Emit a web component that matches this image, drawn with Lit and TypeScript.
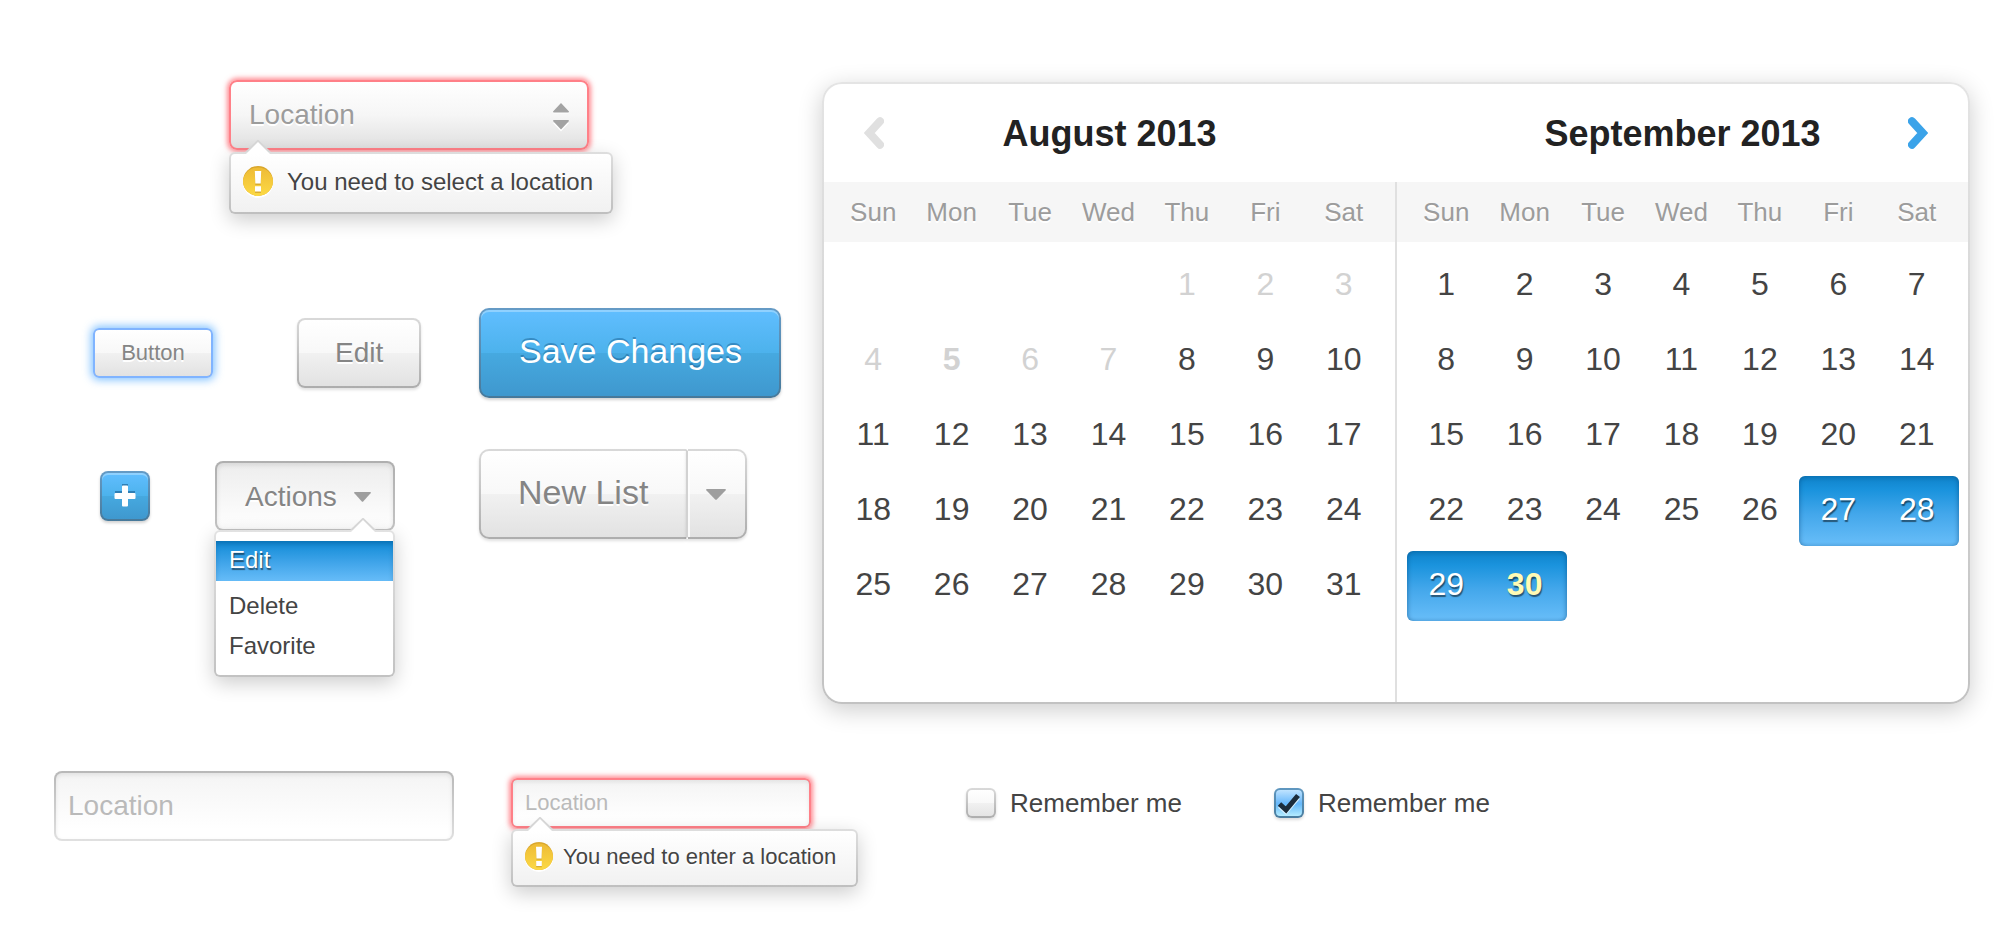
import { LitElement, html, css, nothing } from "lit";
import { customElement, property, state } from "lit/decorators.js";
import { classMap } from "lit/directives/class-map.js";

const font = css`
  :host {
    box-sizing: border-box;
    font-family: "Liberation Sans", Arial, Helvetica, sans-serif;
  }
  *,
  *::before,
  *::after {
    box-sizing: border-box;
  }
  button,
  input,
  select {
    font-family: inherit;
    margin: 0;
  }
`;

const arrow = html`<svg class="arrow" width="26" height="14" viewBox="0 0 26 14" aria-hidden="true">
  <path d="M0 12 L13 -0.5 L26 12 Z" fill="#d6d6d6" />
  <path d="M1 14 L13 2 L25 14 Z" fill="#fff" />
</svg>`;

const caret = (w: number, h: number) => html`<svg class="caret" width=${w} height=${h} viewBox="0 0 20 11" preserveAspectRatio="none" aria-hidden="true">
  <path d="M0.8 0 H19.2 Q20.4 0.4 19.5 1.4 L10.8 10.4 Q10 11.2 9.2 10.4 L0.5 1.4 Q-0.4 0.4 0.8 0 Z" fill="#9e9e9e" />
</svg>`;

@customElement("ui-tooltip")
class UiTooltip extends LitElement {
  @property() size = "large";

  static styles = [
    font,
    css`
      :host {
        display: block;
        white-space: nowrap;
      }
      .tip {
        position: relative;
        display: flex;
        align-items: center;
        gap: 14px;
        height: 62px;
        padding: 0 18px 2px 12px;
        border: 2px solid transparent;
        border-radius: 6px;
        background: linear-gradient(#fff, #f1f1f1) padding-box,
          linear-gradient(#dedede, #bfbfbf) border-box;
        box-shadow: 0 6px 20px rgba(0, 0, 0, 0.2);
        color: #444;
        font-size: 24px;
        text-shadow: 0 2px 0 #fff;
      }
      .small {
        gap: 10px;
        height: 58px;
        padding: 0 20px 2px 12px;
        font-size: 22px;
      }
      .arrow {
        position: absolute;
        left: 14px;
        top: -14px;
      }
      .icon {
        width: 30px;
        height: 32px;
        flex: none;
      }
      .small .icon {
        width: 28px;
        height: 30px;
      }
    `,
  ];

  render() {
    return html`<div class=${classMap({ tip: true, small: this.size === "small" })} role="alert">
      ${arrow}
      <svg class="icon" viewBox="0 0 30 32" aria-hidden="true">
        <defs>
          <linearGradient id="g" x1="0" y1="0" x2="0" y2="1">
            <stop offset="0" stop-color="#eebb35" />
            <stop offset="1" stop-color="#fddc46" />
          </linearGradient>
          <clipPath id="c"><circle cx="15" cy="15" r="15" /></clipPath>
        </defs>
        <circle cx="15" cy="17" r="15" fill="#fff" />
        <g clip-path="url(#c)">
          <rect width="30" height="30" fill="#d9a62b" />
          <circle cx="15" cy="17" r="15.5" fill="url(#g)" />
        </g>
        <path d="M11.8 6.4 H18.2 L17.7 19 H12.300 Z M12 21.800 H18 V27 H12 Z" fill="#cc9d2a" opacity="0.7" />
        <path d="M11.8 5 H18.2 L17.7 17.600 H12.300 Z M12 20.300 H18 V25.600 H12 Z" fill="#fff" />
      </svg>
      <span><slot></slot></span>
    </div>`;
  }
}

interface Month {
  title: string;
  offset: number;
  days: number;
  past: number;
  today?: number;
  accent?: number;
  range: number[];
}

@customElement("ui-calendar")
class UiCalendar extends LitElement {
  private months: Month[] = [
    { title: "August 2013", offset: 4, days: 31, past: 7, today: 5, range: [] },
    { title: "September 2013", offset: 0, days: 30, past: 0, accent: 30, range: [27, 28, 29, 30] },
  ];

  static styles = [
    font,
    css`
      :host {
        display: block;
      }
      .calendar {
        display: grid;
        grid-template-columns: minmax(0, 1fr) 2px minmax(0, 1fr);
        border: 2px solid transparent;
        border-radius: 20px;
        background: linear-gradient(#fff, #fff) padding-box,
          linear-gradient(#e4e4e4, #c2c2c2) border-box;
        box-shadow: 0 6px 24px rgba(0, 0, 0, 0.2);
      }
      .divider {
        margin-top: 98px;
        background: #e0e0e0;
      }
      .head {
        display: grid;
        grid-template-columns: 80px 1fr 80px;
        align-items: center;
        height: 98px;
        padding: 0 10px;
      }
      h2 {
        grid-column: 2;
        margin: 0;
        padding-top: 2px;
        color: #222;
        font-size: 36px;
        line-height: 40px;
        text-align: center;
        white-space: nowrap;
      }
      .nav {
        display: grid;
        place-items: center;
        grid-row: 1;
        padding: 8px;
        border: 0;
        background: none;
        color: #e0e0e0;
      }
      .next {
        grid-column: 3;
        color: #3ba3e9;
      }
      .grid {
        padding: 0 12px 4px 10px;
        background: linear-gradient(#f6f6f6, #f6f6f6) 0 0 / 100% 60px no-repeat;
      }
      table {
        width: 100%;
        table-layout: fixed;
        border-collapse: collapse;
      }
      th {
        height: 60px;
        padding: 0;
        color: #9c9c9c;
        font-size: 26px;
        font-weight: 400;
        text-shadow: 0 2px 0 #fff;
      }
      tbody::before {
        content: "";
        display: table-row;
        height: 6px;
      }
      td {
        height: 75px;
        padding: 0;
      }
      .day {
        display: block;
        width: 100%;
        height: 70px;
        padding: 0 0 2px;
        border: 0;
        background: none;
        color: #444;
        font-size: 32px;
        text-align: center;
      }
      .past {
        color: #d2d2d2;
      }
      .today {
        font-weight: 700;
      }
      .sel {
        background: linear-gradient(#0b76b8, #1389d2 6px, #1a93dd 14px, #43a7eb 38px, #64bbf7 66px, #58abe6);
        color: #fff;
        text-shadow: 1px 2px 1px rgba(0, 0, 0, 0.5);
      }
      .start {
        border-radius: 6px 0 0 6px;
        box-shadow: inset 4px 0 4px -3px rgba(0, 60, 110, 0.4);
      }
      .end {
        width: calc(100% + 3px);
        padding-right: 3px;
        border-radius: 0 6px 6px 0;
        box-shadow: inset -4px 0 4px -3px rgba(0, 60, 110, 0.4);
      }
      .accent {
        color: #fffbb5;
        font-weight: 700;
      }
    `,
  ];

  private day(m: Month, n: number, col: number) {
    if (n < 1 || n > m.days) return nothing;
    const sel = m.range.includes(n);
    return html`<button
      type="button"
      class=${classMap({
        day: true,
        past: n <= m.past,
        today: n === m.today,
        sel,
        start: sel && (col === 0 || !m.range.includes(n - 1)),
        end: sel && (col === 6 || !m.range.includes(n + 1)),
        accent: n === m.accent,
      })}
      ?disabled=${n <= m.past}
    >${n}</button>`;
  }

  private month(m: Month, i: number) {
    return html`<section>
      <div class="head">
        ${i === 0
          ? html`<button class="nav" type="button" aria-label="Previous month" disabled>
              <svg width="20" height="32" viewBox="0 0 20 32"><path d="M16 4.3 L5.3 16 L16 27.7" fill="none" stroke="currentColor" stroke-width="8" stroke-linecap="round" /></svg>
            </button>`
          : nothing}
        <h2>${m.title}</h2>
        ${i === 1
          ? html`<button class="nav next" type="button" aria-label="Next month">
              <svg width="20" height="32" viewBox="0 0 20 32"><path d="M4 4.3 L14.7 16 L4 27.7" fill="none" stroke="currentColor" stroke-width="8" stroke-linecap="round" /></svg>
            </button>`
          : nothing}
      </div>
      <div class="grid">
        <table aria-label=${m.title}>
          <thead>
            <tr>
              ${["Sun", "Mon", "Tue", "Wed", "Thu", "Fri", "Sat"].map((d) => html`<th scope="col">${d}</th>`)}
            </tr>
          </thead>
          <tbody>
            ${[0, 1, 2, 3, 4, 5].map(
              (r) => html`<tr>
                ${[0, 1, 2, 3, 4, 5, 6].map((c) => html`<td>${this.day(m, r * 7 + c + 1 - m.offset, c)}</td>`)}
              </tr>`
            )}
          </tbody>
        </table>
      </div>
    </section>`;
  }

  render() {
    return html`<div class="calendar">
      ${this.month(this.months[0], 0)}
      <div class="divider"></div>
      ${this.month(this.months[1], 1)}
    </div>`;
  }
}

@customElement("app-root")
class AppRoot extends LitElement {
  @state() private active = 0;

  static styles = [
    font,
    css`
      :host {
        display: block;
        min-height: 100vh;
        padding: 80px 30px 45px 54px;
        background: #fff;
      }
      .top {
        display: grid;
        grid-template-columns: 727px minmax(0, 1fr);
        column-gap: 41px;
      }
      ui-calendar {
        margin-top: 2px;
      }
      .field {
        position: relative;
      }
      .picker {
        width: 360px;
        margin: 0 0 158px 175px;
      }
      select {
        display: block;
        width: 100%;
        height: 70px;
        padding: 0 50px 2px 18px;
        appearance: none;
        border: 2px solid #ff8088;
        border-radius: 8px;
        background: linear-gradient(#fff, #f6f6f6 50%, #e0e0e0);
        box-shadow: 0 0 5px 2px rgba(255, 100, 110, 0.75);
        color: #9c9c9c;
        font-size: 28px;
        text-shadow: 0 2px 0 #fff;
      }
      .spin {
        position: absolute;
        right: 20px;
        top: 23px;
        pointer-events: none;
      }
      .tip {
        position: absolute;
        left: 0;
        top: calc(100% + 2px);
        z-index: 1;
      }
      .controls {
        display: flex;
        justify-content: space-between;
      }
      .minor {
        display: flex;
        flex-direction: column;
        gap: 73px;
        padding: 10px 0 0 39px;
      }
      .major {
        display: flex;
        flex-direction: column;
        align-items: flex-start;
        gap: 51px;
      }
      .row {
        display: flex;
        align-items: center;
      }
      .first {
        gap: 84px;
      }
      .second {
        gap: 65px;
        padding-left: 7px;
      }
      .btn {
        height: 70px;
        padding: 0 36px;
        border: 2px solid transparent;
        border-radius: 8px;
        background: linear-gradient(#fff, #f8f8f8 50%, #f1f1f1 50%, #e2e2e2) padding-box,
          linear-gradient(#d9d9d9, #adadad) border-box;
        box-shadow: 0 2px 3px rgba(0, 0, 0, 0.12);
        color: #858585;
        font-size: 28px;
        text-shadow: 0 2px 0 #fff;
        white-space: nowrap;
      }
      .focus {
        height: 50px;
        padding: 0;
        width: 120px;
        font-size: 22px;
        border-color: #80b4ff;
        border-radius: 6px;
        box-shadow: 0 0 8px 2px rgba(90, 175, 255, 0.75);
      }
      .primary {
        background: linear-gradient(#61beff, #4cb2ec 50%, #46a9e0 50%, #3f98ce) padding-box,
          linear-gradient(#659bc6, #47799a) border-box;
        box-shadow: 0 2px 3px rgba(0, 0, 0, 0.18), inset 0 2px 0 rgba(255, 255, 255, 0.3);
        color: #fff;
        text-shadow: 0 -2px 0 rgba(0, 60, 110, 0.35);
      }
      .large {
        height: 90px;
        padding: 0 37px 4px 38px;
        border-radius: 10px;
        font-size: 34px;
      }
      .square {
        display: grid;
        place-items: center;
        width: 50px;
        height: 50px;
        padding: 0;
      }
      .pressed {
        display: flex;
        align-items: center;
        gap: 17px;
        width: 180px;
        padding: 1px 0 0 28px;
        background: linear-gradient(#ededed, #fff) padding-box,
          linear-gradient(#afafaf, #c4c4c4) border-box;
        box-shadow: inset 0 2px 5px rgba(0, 0, 0, 0.1);
      }
      .menu {
        position: absolute;
        left: -1px;
        right: 0;
        top: calc(100% - 1px);
        display: flex;
        flex-direction: column;
        padding: 9px 0 8px;
        border: 2px solid transparent;
        border-radius: 6px;
        background: linear-gradient(#fff, #fff) padding-box,
          linear-gradient(#e2e2e2, #c2c2c2) border-box;
        box-shadow: 0 6px 20px rgba(0, 0, 0, 0.2);
      }
      .menu .arrow {
        position: absolute;
        left: 134px;
        top: -14px;
      }
      .item {
        height: 40px;
        padding: 0 13px 2px;
        border: 0;
        background: none;
        color: #444;
        font-size: 24px;
        text-align: left;
      }
      .item.on {
        margin-bottom: 6px;
        background: linear-gradient(#0f8ad6, #41a5ea 55%, #66bcf8);
        box-shadow: inset 0 4px 6px -2px rgba(0, 60, 110, 0.4);
        color: #fff;
        text-shadow: 1px 2px 1px rgba(0, 0, 0, 0.5);
      }
      .split {
        display: flex;
      }
      .split .main {
        padding: 0 38px 4px 37px;
        border-right: 0;
        border-radius: 10px 0 0 10px;
      }
      .split .more {
        display: grid;
        place-items: center;
        width: 61px;
        padding: 0 2px 0 0;
        border-radius: 0 10px 10px 0;
        border-left-color: #d2d2d2;
        box-shadow: 0 2px 3px rgba(0, 0, 0, 0.12), inset 2px 0 0 rgba(255, 255, 255, 0.8);
      }
      .bottom {
        display: flex;
        align-items: flex-start;
        gap: 57px;
        margin-top: 67px;
      }
      .text {
        display: block;
        width: 400px;
        height: 70px;
        padding: 0 12px;
        border: 2px solid transparent;
        border-radius: 8px;
        background: linear-gradient(#f4f4f4, #fff 85%) padding-box,
          linear-gradient(#b8b8b8, #e0e0e0) border-box;
        box-shadow: inset 0 2px 4px rgba(0, 0, 0, 0.08);
        color: #444;
        font-size: 28px;
      }
      .text::placeholder {
        color: #bababa;
        opacity: 1;
      }
      .invalid {
        width: 300px;
        height: 50px;
        border-color: #ff8088;
        border-radius: 6px;
        box-shadow: 0 0 5px 2px rgba(255, 100, 110, 0.75), inset 0 2px 4px rgba(0, 0, 0, 0.08);
        font-size: 22px;
      }
      .trailing {
        display: flex;
        align-items: center;
        height: 64px;
      }
      .trailing .tip {
        top: calc(100% + 1px);
      }
      .checks {
        display: flex;
        gap: 92px;
        margin-left: 155px;
      }
      .check {
        position: relative;
        display: flex;
        align-items: center;
        gap: 14px;
        color: #444;
        font-size: 26px;
        white-space: nowrap;
      }
      .box {
        width: 30px;
        height: 30px;
        appearance: none;
        border: 2px solid transparent;
        border-radius: 6px;
        background: linear-gradient(#fff, #f8f8f8 50%, #f1f1f1 50%, #e4e4e4) padding-box,
          linear-gradient(#d9d9d9, #adadad) border-box;
        box-shadow: 0 2px 3px rgba(0, 0, 0, 0.14);
      }
      .box:checked {
        background: linear-gradient(#bfe3ff, #6ab9fb 50%, #67bafa 55%, #b4ecff) padding-box,
          linear-gradient(#5f97c0, #4a7d9f) border-box;
      }
      .tick {
        position: absolute;
        left: 3px;
        top: 5px;
        display: none;
        pointer-events: none;
      }
      .box:checked + .tick {
        display: block;
      }
    `,
  ];

  render() {
    return html`
      <div class="top">
        <div>
          <div class="field picker">
            <select aria-label="Location">
              <option>Location</option>
            </select>
            <svg class="spin" width="16" height="29" viewBox="0 0 16 29" aria-hidden="true">
              <path d="M0 10.5 L8 2.5 L16 10.5 Z M0 20 L8 28.5 L16 20 Z" fill="#fff" />
              <path d="M0 8.5 L8 0 L16 8.5 Q16 9.5 15 9.5 H1 Q0 9.5 0 8.5 Z M0 18 Q0 17 1 17 H15 Q16 17 16 18 L8 26.5 Z" fill="#a3a3a3" />
            </svg>
            <ui-tooltip class="tip">You need to select a location</ui-tooltip>
          </div>
          <div class="controls">
            <div class="minor">
              <div class="row first">
                <button class="btn focus" type="button">Button</button>
                <button class="btn" type="button">Edit</button>
              </div>
              <div class="row second">
                <button class="btn primary square" type="button" aria-label="Add">
                  <svg width="22" height="24" viewBox="0 0 22 24" aria-hidden="true">
                    <path d="M8 0 H14 V7 H21 V13 H1 V7 H8 Z" fill="#2f7fb5" />
                    <path d="M9 1.5 H13 Q14 1.5 14 2.5 V9 H20.500 Q21.500 9 21.500 10 V14 Q21.500 15 20.500 15 H14 V21.500 Q14 22.500 13 22.500 H9 Q8 22.500 8 21.500 V15 H1.500 Q0.500 15 0.500 14 V10 Q0.500 9 1.500 9 H8 V2.500 Q8 1.500 9 1.500 Z" fill="#fff" />
                  </svg>
                </button>
                <div class="field">
                  <button class="btn pressed" type="button" aria-haspopup="menu" aria-expanded="true">
                    Actions ${caret(17, 10)}
                  </button>
                  <div class="menu" role="menu">
                    ${arrow}
                    ${["Edit", "Delete", "Favorite"].map(
                      (label, i) => html`<button
                        type="button"
                        role="menuitem"
                        class=${classMap({ item: true, on: i === this.active })}
                        @mouseenter=${() => (this.active = i)}
                      >${label}</button>`
                    )}
                  </div>
                </div>
              </div>
            </div>
            <div class="major">
              <button class="btn primary large" type="button">Save Changes</button>
              <div class="split">
                <button class="btn large main" type="button">New List</button>
                <button class="btn large more" type="button" aria-label="More list options">${caret(20, 11)}</button>
              </div>
            </div>
          </div>
        </div>
        <ui-calendar></ui-calendar>
      </div>
      <div class="bottom">
        <input class="text" type="text" placeholder="Location" aria-label="Location" />
        <div class="trailing">
          <div class="field">
            <input class="text invalid" type="text" placeholder="Location" aria-label="Location" aria-invalid="true" />
            <ui-tooltip class="tip" size="small">You need to enter a location</ui-tooltip>
          </div>
          <div class="checks">
            ${[false, true].map(
              (on) => html`<label class="check">
                <input class="box" type="checkbox" ?checked=${on} />
                <svg class="tick" width="24" height="22" viewBox="0 0 24 22" aria-hidden="true">
                  <path d="M2.500 13 L9 18.800 L21 4.500" fill="none" stroke="#d4f0ff" stroke-width="4.500" />
                  <path d="M2.500 11 L9 16.800 L21 2.500" fill="none" stroke="#1b2c3b" stroke-width="5" />
                </svg>
                Remember me
              </label>`
            )}
          </div>
        </div>
      </div>
    `;
  }
}
